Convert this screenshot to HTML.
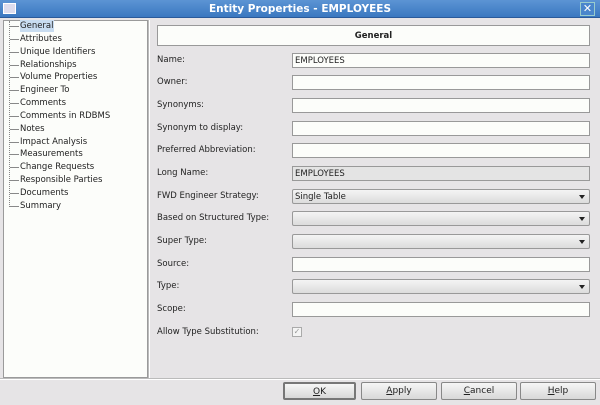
<!DOCTYPE html>
<html><head><style>
*{margin:0;padding:0;box-sizing:border-box}
body{width:600px;height:405px;background:#e6e4e6;font-family:"DejaVu Sans","Liberation Sans",sans-serif;font-size:8.5px;color:#222;position:relative;overflow:hidden}
.a{position:absolute}
.title{left:0;top:0;width:600px;height:18px;background:linear-gradient(#5c94d4,#3a78c0);border-bottom:1px solid #2a5a9a;color:#fff;font-weight:bold;font-size:10.5px;text-align:center;line-height:18px}
.tree{left:3px;top:20px;width:145px;height:358px;background:#fcfdfa;border:1px solid #9a9a9a}
.ti{position:absolute;left:16px;height:12px;line-height:12px;font-size:8.5px}
.ti:before{content:"";position:absolute;left:-10px;top:6px;width:9px;border-top:1px solid #888}
.vl{position:absolute;left:5px;top:0;width:0;height:186px;border-left:1px dotted #888}
.hdr{left:157px;top:25px;width:433px;height:21px;background:#fcfdfa;border:1px solid #999;text-align:center;line-height:20px;font-weight:bold;font-size:8.5px}
.lb{left:157px;height:14px;line-height:15px}
.f{left:292px;width:298px;height:15px;background:#fcfdfa;border:1px solid #999;padding-left:2px;line-height:14px}
.cb{background:linear-gradient(#f4f4f4,#dcdcdc);border-radius:2px}
.cb:after{content:"";position:absolute;right:4px;top:5px;border-left:3px solid transparent;border-right:3px solid transparent;border-top:4px solid #222}
.btn{top:382px;height:18px;border:1px solid #888;border-radius:2px;background:linear-gradient(#f6f6f6,#d8d8d8);text-align:center;line-height:16px;font-size:9px}
</style></head><body>
<div class="a title">Entity Properties - EMPLOYEES</div>
<div class="a" style="left:3px;top:3px;width:13px;height:11px;border:1px solid #fff;background:#dde"></div>
<div class="a" style="left:580px;top:2px;width:15px;height:14px;border:1px solid #9cc;background:#4a86cc;color:#fff;font-size:11px;line-height:12px;text-align:center;font-weight:bold">✕</div>
<div class="a tree">
<div class="vl"></div>
<div class="ti" style="top:-1px;background:#c8dcf0">General</div>
<div class="ti" style="top:12px">Attributes</div>
<div class="ti" style="top:25px">Unique Identifiers</div>
<div class="ti" style="top:38px">Relationships</div>
<div class="ti" style="top:50px">Volume Properties</div>
<div class="ti" style="top:63px">Engineer To</div>
<div class="ti" style="top:76px">Comments</div>
<div class="ti" style="top:89px">Comments in RDBMS</div>
<div class="ti" style="top:102px">Notes</div>
<div class="ti" style="top:115px">Impact Analysis</div>
<div class="ti" style="top:127px">Measurements</div>
<div class="ti" style="top:140px">Change Requests</div>
<div class="ti" style="top:153px">Responsible Parties</div>
<div class="ti" style="top:166px">Documents</div>
<div class="ti" style="top:179px">Summary</div>
</div>
<div class="a" style="left:148px;top:20px;width:2px;height:358px;border-left:1px solid #bbb;border-right:1px solid #fff"></div>
<div class="a hdr">General</div>
<div class="a lb" style="top:53px">Name:</div><div class="a f" style="top:53px">EMPLOYEES</div>
<div class="a lb" style="top:75px">Owner:</div><div class="a f" style="top:75px"></div>
<div class="a lb" style="top:98px">Synonyms:</div><div class="a f" style="top:98px"></div>
<div class="a lb" style="top:121px">Synonym to display:</div><div class="a f" style="top:121px"></div>
<div class="a lb" style="top:143px">Preferred Abbreviation:</div><div class="a f" style="top:143px"></div>
<div class="a lb" style="top:166px">Long Name:</div><div class="a f" style="top:166px;background:#e4e4e4">EMPLOYEES</div>
<div class="a lb" style="top:189px">FWD Engineer Strategy:</div><div class="a f cb" style="top:189px">Single Table</div>
<div class="a lb" style="top:211px">Based on Structured Type:</div><div class="a f cb" style="top:211px"></div>
<div class="a lb" style="top:234px">Super Type:</div><div class="a f cb" style="top:234px"></div>
<div class="a lb" style="top:257px">Source:</div><div class="a f" style="top:257px"></div>
<div class="a lb" style="top:279px">Type:</div><div class="a f cb" style="top:279px"></div>
<div class="a lb" style="top:302px">Scope:</div><div class="a f" style="top:302px"></div>
<div class="a lb" style="top:325px">Allow Type Substitution:</div>
<div class="a" style="left:292px;top:327px;width:10px;height:10px;border:1px solid #aaa;background:#f4f4f4;color:#999;font-size:8px;line-height:8px;text-align:center">✓</div>
<div class="a" style="left:0;top:378px;width:600px;height:0;border-top:1px solid #bbb;border-bottom:1px solid #fff"></div>
<div class="a btn" style="left:283px;width:73px;border:2px solid #777"><u>O</u>K</div>
<div class="a btn" style="left:361px;width:76px"><u>A</u>pply</div>
<div class="a btn" style="left:441px;width:76px"><u>C</u>ancel</div>
<div class="a btn" style="left:520px;width:76px"><u>H</u>elp</div>
</body></html>
